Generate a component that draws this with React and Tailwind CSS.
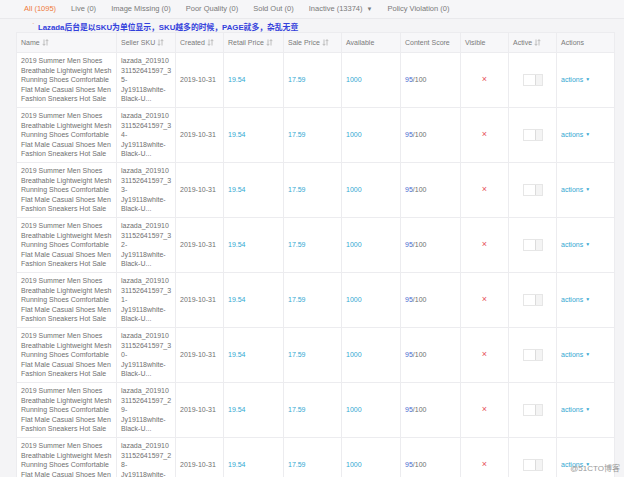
import React from "react";

const SortIcon = () => (
  <svg width="7" height="7" viewBox="0 0 7 7" className="inline-block ml-[2px] -mt-[1px]" fill="none" stroke="#b0b0b0" strokeWidth="0.8">
    <path d="M2 0.5 V6.3 M0.6 4.9 L2 6.3 L3.4 4.9" />
    <path d="M5 6.5 V0.7 M3.6 2.1 L5 0.7 L6.4 2.1" />
  </svg>
);

const tabs = [
  { label: "All (1095)", active: true },
  { label: "Live (0)" },
  { label: "Image Missing (0)" },
  { label: "Poor Quality (0)" },
  { label: "Sold Out (0)" },
  { label: "Inactive (13374)", caret: true },
  { label: "Policy Violation (0)" },
];

const headers = [
  { t: "Name", s: true },
  { t: "Seller SKU", s: true },
  { t: "Created", s: true },
  { t: "Retail Price", s: true },
  { t: "Sale Price", s: true },
  { t: "Available" },
  { t: "Content Score" },
  { t: "Visible" },
  { t: "Active", s: true },
  { t: "Actions" },
];

const widths = [100, 59, 48, 60, 58, 59, 60, 48, 48, 58];
const suffixes = ["35", "34", "33", "32", "31", "30", "29", "28"];

const nameLines = [
  "2019 Summer Men Shoes",
  "Breathable Lightweight Mesh",
  "Running Shoes Comfortable",
  "Flat Male Casual Shoes Men",
  "Fashion Sneakers Hot Sale",
];

export default function App() {
  return (
    <div className="relative w-[624px] h-[477px] overflow-hidden bg-[#f4f4f6] font-['Liberation_Sans',Arial,'Noto_Sans_CJK_SC',sans-serif] text-[7px] leading-[9.5px] text-[#707070]">
      <div className="h-[19px] flex items-center pl-[24px] gap-[15px] border-b border-[#e9e9ec] bg-[#f6f6f8] text-[7.5px]">
        {tabs.map((t) => (
          <span key={t.label} className={t.active ? "text-[#f07a3c]" : "text-[#7a7a7a]"}>
            {t.label}
            {t.caret && <span className="ml-[4px] text-[6px]">▼</span>}
          </span>
        ))}
      </div>
      <div className="h-[13px] relative flex items-center pl-[38px] pt-[5px] text-[7.8px] font-bold text-[#3340dc] font-['Liberation_Sans','Noto_Sans_CJK_SC',sans-serif]">
        <span className="absolute left-[32px] top-[2px] text-[#e8a070] text-[8px] font-normal">ˋ</span>
        Lazada后台是以SKU为单位显示，SKU越多的时候，PAGE就多，杂乱无章
      </div>
      <div className="ml-[16px] w-[598px] bg-white">
        <table className="table-fixed border-collapse w-[598px]">
          <colgroup>
            {widths.map((w, i) => (
              <col key={i} style={{ width: w }} />
            ))}
          </colgroup>
          <thead>
            <tr className="h-[20px] bg-[#f7f7f9]">
              {headers.map((h) => (
                <th key={h.t} className="text-left font-normal px-[4px] border border-[#ececef] text-[#7a7a7a] whitespace-nowrap">
                  {h.t}
                  {h.s && <SortIcon />}
                </th>
              ))}
            </tr>
          </thead>
          <tbody>
            {suffixes.map((s) => (
              <tr key={s} className="h-[55px]">
                <td className="px-[4px] border border-[#ececef] align-middle whitespace-nowrap">
                  {nameLines.map((l) => (
                    <div key={l}>{l}</div>
                  ))}
                </td>
                <td className="px-[4px] border border-[#ececef] align-middle whitespace-nowrap">
                  <div>lazada_201910</div>
                  <div>31152641597_{s[0]}</div>
                  <div>{s[1]}-</div>
                  <div>Jy19118white-</div>
                  <div>Black-U...</div>
                </td>
                <td className="px-[4px] border border-[#ececef] align-middle">2019-10-31</td>
                <td className="px-[4px] border border-[#ececef] align-middle text-[#34a8d2]">19.54</td>
                <td className="px-[4px] border border-[#ececef] align-middle text-[#34a8d2]">17.59</td>
                <td className="px-[4px] border border-[#ececef] align-middle text-[#34a8d2]">1000</td>
                <td className="px-[4px] border border-[#ececef] align-middle">
                  <span className="text-[#4a6bd0]">95</span>/100
                </td>
                <td className="border border-[#ececef] align-middle text-center text-[#e6505a] text-[9px]">×</td>
                <td className="border border-[#ececef] align-middle">
                  <div className="ml-[14px] w-[20px] h-[12px] border border-[#e6e6e6] flex justify-end">
                    <div className="w-[7px] h-full border-l border-[#dcdcdc] bg-[#f4f4f4]" />
                  </div>
                </td>
                <td className="px-[4px] border border-[#ececef] align-middle text-[#34a8d2] whitespace-nowrap">
                  actions<span className="ml-[2px] text-[5px] align-middle">▼</span>
                </td>
              </tr>
            ))}
          </tbody>
        </table>
      </div>
      <div className="absolute right-[4px] bottom-[4px] text-[8px] text-[#999] font-['Liberation_Sans','Noto_Sans_CJK_SC',sans-serif]">
        @51CTO博客
      </div>
    </div>
  );
}
